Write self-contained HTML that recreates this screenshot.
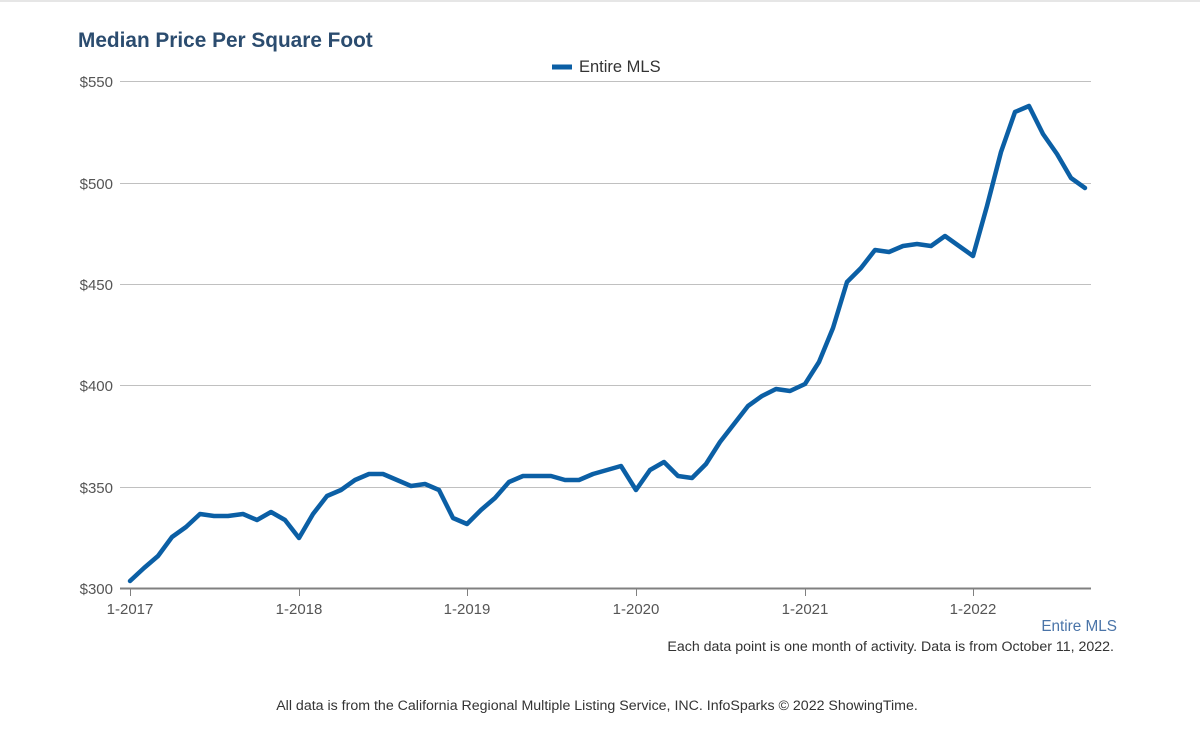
<!DOCTYPE html>
<html><head><style>
body{margin:0;width:1200px;height:732px;background:#fff;font-family:"Liberation Sans",Arial,sans-serif;overflow:hidden;position:relative}
.t{position:absolute;white-space:nowrap}
</style></head><body>
<div style="position:absolute;left:0;top:0;width:1200px;height:2px;background:#e6e6e6"></div>
<div class="t" style="left:78px;top:29px;font-size:20.8px;font-weight:bold;color:#2b4c6f">Median Price Per Square Foot</div>
<svg width="1200" height="732" style="position:absolute;left:0;top:0" font-family="Liberation Sans, Arial, sans-serif">
<g stroke="#c0c0c0" stroke-width="1">
<line x1="120" y1="81.5" x2="1091" y2="81.5"/>
<line x1="120" y1="183.5" x2="1091" y2="183.5"/>
<line x1="120" y1="284.5" x2="1091" y2="284.5"/>
<line x1="120" y1="385.5" x2="1091" y2="385.5"/>
<line x1="120" y1="487.5" x2="1091" y2="487.5"/>
</g>
<line x1="120" y1="588.5" x2="1091" y2="588.5" stroke="#808080" stroke-width="2"/>
<g stroke="#808080" stroke-width="1">
<line x1="130.5" y1="588" x2="130.5" y2="596"/><line x1="299.5" y1="588" x2="299.5" y2="596"/>
<line x1="467.5" y1="588" x2="467.5" y2="596"/><line x1="636.5" y1="588" x2="636.5" y2="596"/>
<line x1="805.5" y1="588" x2="805.5" y2="596"/><line x1="973.5" y1="588" x2="973.5" y2="596"/>
</g>
<g fill="#555" font-size="15" text-anchor="end">
<text x="113" y="87">$550</text><text x="113" y="189">$500</text><text x="113" y="290">$450</text>
<text x="113" y="391">$400</text><text x="113" y="493">$350</text><text x="113" y="594">$300</text>
</g>
<g fill="#555" font-size="15" text-anchor="middle">
<text x="130" y="614">1-2017</text><text x="299" y="614">1-2018</text><text x="467" y="614">1-2019</text>
<text x="636" y="614">1-2020</text><text x="805" y="614">1-2021</text><text x="973" y="614">1-2022</text>
</g>
<line x1="552" y1="67" x2="572" y2="67" stroke="#0b5fa5" stroke-width="5"/>
<text x="579" y="72" font-size="16.5" fill="#333">Entire MLS</text>
<polyline fill="none" stroke="#0b5fa5" stroke-width="4.5" stroke-linejoin="round" stroke-linecap="round" points="130,581 144,568 158,556 172,537 186,527 200,514 214,516 228,516 243,514 257,520 271,512 285,520 299,538 313,514 327,496 341,490 355,480 369,474 383,474 397,480 411,486 425,484 439,490 453,518 467,524 481,510 495,498 509,482 523,476 537,476 551,476 565,480 579,480 593,474 607,470 621,466 636,490 650,470 664,462 678,476 692,478 706,464 720,442 734,424 748,406 762,396 776,389 790,391 805,384 819,362 833,328 847,282 861,268 875,250 889,252 903,246 917,244 931,246 945,236 959,246 973,256 987,206 1001,152 1015,112 1029,106 1043,134 1057,154 1071,178 1085,188"/>
<text x="1117" y="631" font-size="15.3" fill="#4a74a8" text-anchor="end">Entire MLS</text>
<text x="1114" y="651" font-size="14.2" fill="#333" text-anchor="end">Each data point is one month of activity. Data is from October 11, 2022.</text>
<text x="597" y="710" font-size="14.2" fill="#333" text-anchor="middle">All data is from the California Regional Multiple Listing Service, INC. InfoSparks © 2022 ShowingTime.</text>
</svg>
</body></html>
